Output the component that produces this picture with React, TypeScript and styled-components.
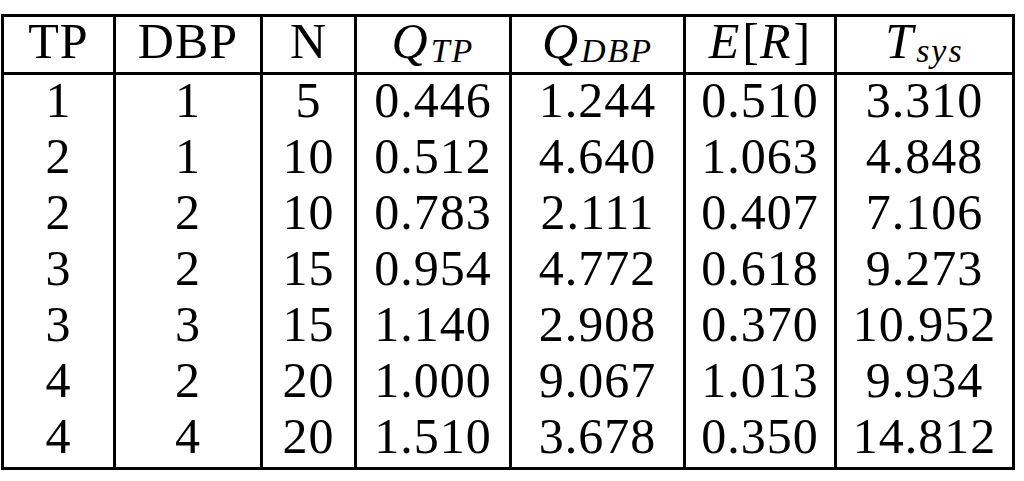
import styled, { createGlobalStyle } from "styled-components";

const GlobalStyle = createGlobalStyle`
    html, body {
        margin: 0;
        padding: 0;
        background: #ffffff;
    }
`;

const widths = [109, 144, 91, 152, 171, 148, 175];

const rows: string[][] = [
    ["1", "1", "5", "0.446", "1.244", "0.510", "3.310"],
    ["2", "1", "10", "0.512", "4.640", "1.063", "4.848"],
    ["2", "2", "10", "0.783", "2.111", "0.407", "7.106"],
    ["3", "2", "15", "0.954", "4.772", "0.618", "9.273"],
    ["3", "3", "15", "1.140", "2.908", "0.370", "10.952"],
    ["4", "2", "20", "1.000", "9.067", "1.013", "9.934"],
    ["4", "4", "20", "1.510", "3.678", "0.350", "14.812"],
];

const App = () => {
    return (
        <Page>
            <GlobalStyle />
            <Table>
                <HeaderRow>
                    <Cell $w={widths[0]} $first>TP</Cell>
                    <Cell $w={widths[1]}>DBP</Cell>
                    <Cell $w={widths[2]}>N</Cell>
                    <Cell $w={widths[3]}>
                        <Var>Q</Var>
                        <Sub>TP</Sub>
                    </Cell>
                    <Cell $w={widths[4]}>
                        <Var>Q</Var>
                        <Sub>DBP</Sub>
                    </Cell>
                    <Cell $w={widths[5]}>
                        <Var>E</Var>[<Var>R</Var>]
                    </Cell>
                    <Cell $w={widths[6]}>
                        <Var>T</Var>
                        <Sub>sys</Sub>
                    </Cell>
                </HeaderRow>
                {rows.map((row, i) => (
                    <BodyRow key={i}>
                        {row.map((value, j) => (
                            <Cell key={j} $w={widths[j]} $first={j === 0}>
                                {value}
                            </Cell>
                        ))}
                    </BodyRow>
                ))}
            </Table>
        </Page>
    );
};

const Page = styled.div`
    padding: 14px 0 0 1px;
    font-family: "Liberation Serif", "Times New Roman", serif;
    color: #000000;
`;

const Table = styled.div`
    display: inline-flex;
    flex-flow: column;
    border: 3px solid #000000;
`;

const HeaderRow = styled.div`
    display: flex;
    height: 55px;
    border-bottom: 3px solid #000000;
`;

const BodyRow = styled.div`
    display: flex;
    height: 56px;
`;

const Cell = styled.div<{ $w: number; $first?: boolean }>`
    width: ${(p) => p.$w}px;
    flex: none;
    display: flex;
    align-items: center;
    justify-content: center;
    padding-bottom: 7px;
    border-left: ${(p) => (p.$first ? "none" : "3px solid #000000")};
    font-size: 50px;
    line-height: 1;
    letter-spacing: 1px;
    white-space: nowrap;
`;

const Var = styled.i`
    font-style: italic;
    padding-right: 2px;
`;

const Sub = styled.span`
    font-style: italic;
    font-size: 34px;
    position: relative;
    top: 10px;
    letter-spacing: 2px;
`;

export default App;
